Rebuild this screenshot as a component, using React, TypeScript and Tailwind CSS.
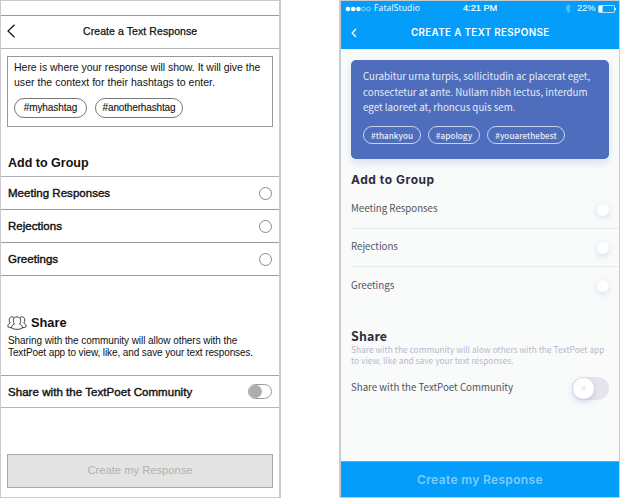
import type { ReactNode } from "react";

const sourceSans = "font-['Noto_Sans_CJK_SC','Noto_Sans',sans-serif]";
const montserrat = "font-['Inter','Open_Sans',sans-serif]";

function GroupRow({ label, height }: { label: string; height: string }) {
  return (
    <div className={`flex items-center justify-between border-b border-[#9b9b9b] pl-[7px] pr-[7.5px] ${height}`}>
      <span className="pt-[2px] text-[11.5px] leading-none tracking-[0.03px] [-webkit-text-stroke:0.4px_#111]">{label}</span>
      <span className="size-[13px] rounded-full border border-[#8a8a8a] bg-white" />
    </div>
  );
}

function Wireframe() {
  return (
    <section className="flex h-[498px] w-[281px] shrink-0 flex-col whitespace-nowrap border-y border-l border-r-2 border-[#cbcad1] bg-white font-['Liberation_Sans',Arial,sans-serif] text-[#111]">
      <div className="h-[15px] shrink-0 border-b border-[#999]" />
      <header className="flex h-[33px] shrink-0 items-center border-b border-[#b5b5b5] pb-[2px] pl-[6px]">
        <svg width="9" height="14" viewBox="0 0 9 14" fill="none" stroke="#111" strokeWidth="1.2">
          <path d="M7.5 .7 1 7l6.500 6.300" />
        </svg>
        <h1 className="ml-[67px] text-[10.5px] leading-none tracking-[0.08px] [-webkit-text-stroke:0.25px_#111]">Create a Text Response</h1>
      </header>
      <div className="ml-[6px] mt-[7px] h-[71px] w-[266px] shrink-0 border border-[#999] pl-[6px] pt-[3px]">
        <p className="text-[10.5px] leading-[15px] tracking-[-0.02px]">
          Here is where your response will show. It will give the
          <br />
          <span className="tracking-[0.03px]">user the context for their hashtags to enter.</span>
        </p>
        <div className="mt-[8px] flex gap-[8px]">
          <span className="flex h-[20px] w-[73px] items-center justify-center rounded-full border border-[#777] text-[10px] leading-none tracking-[-0.1px] [-webkit-text-stroke:0.1px_#111]">#myhashtag</span>
          <span className="flex h-[20px] w-[88px] items-center justify-center rounded-full border border-[#777] text-[10px] leading-none tracking-[-0.15px] [-webkit-text-stroke:0.1px_#111]">#anotherhashtag</span>
        </div>
      </div>
      <div className="flex h-[50px] shrink-0 items-end border-b border-[#b2b2b2] pb-[7px] pl-[7px]">
        <h2 className="text-[12.5px] font-bold leading-none">Add to Group</h2>
      </div>
      <GroupRow label="Meeting Responses" height="h-[33px]" />
      <GroupRow label="Rejections" height="h-[33px]" />
      <GroupRow label="Greetings" height="h-[33px]" />
      <div className="h-[100px] shrink-0 border-b border-[#a5a5a5] pl-[6px] pt-[40px]">
        <div className="flex items-center gap-[4px]">
          <svg width="20" height="14" viewBox="0 0 18 13" fill="none" stroke="#222" strokeWidth=".8">
            <path d="M6.700 7.500C5.900 6.500 5.700 5.500 5.700 4c0-2 1.200-3.200 3.300-3.200S12.300 2 12.300 4c0 1.500-.2 2.500-1 3.500M6.700 7.500C4.800 8.200 4 9 4 11.200c1.200.8 3 1.200 5 1.200s3.800-.4 5-1.200c0-2.200-.8-3-2.700-3.700" />
            <path d="M6.300 1.300C4 .1 1.600 1.200 1.800 3.700c0 1.500.4 2.200 1 2.700C1.200 7 .5 8 .5 10c.9.600 2 .9 3.500.9M11.700 1.300c2.300-1.200 4.700-.1 4.500 2.400 0 1.500-.4 2.200-1 2.700 1.600.6 2.300 1.600 2.300 3.600-.9.600-2 .9-3.500.9" />
          </svg>
          <h2 className="pt-px text-[12.8px] font-bold leading-none">Share</h2>
        </div>
        <p className="ml-px mt-[5px] text-[10px] leading-[12px] tracking-[-0.07px]">
          Sharing with the community will allow others with the
          <br />
          <span className="tracking-[-0.11px]">TextPoet app to view, like, and save your text responses.</span>
        </p>
      </div>
      <div className="flex h-[32px] shrink-0 items-center justify-between border-b border-[#b5b5b5] pl-[7px] pr-[7px]">
        <span className="pt-[2px] text-[11.5px] leading-none tracking-[0.05px] [-webkit-text-stroke:0.4px_#111]">Share with the TextPoet Community</span>
        <span className="flex h-[15px] w-[24px] items-center rounded-full border border-[#999]">
          <span className="size-[13px] rounded-full bg-[#adadad]" />
        </span>
      </div>
      <button className="ml-[6px] mt-[46px] h-[34px] w-[266px] shrink-0 border border-[#a9a9a9] bg-[#e4e4e4] text-[11.2px] leading-none text-[#b0b0b0]">
        Create my Response
      </button>
    </section>
  );
}

function Tag({ children, width }: { children: ReactNode; width: string }) {
  return (
    <span className={`flex h-[18px] items-center justify-center rounded-full border border-[#c7d3ee] pb-px text-[8.2px] font-medium leading-none ${width}`}>
      {children}
    </span>
  );
}

function Choice({ label }: { label: string }) {
  return (
    <div className="flex h-[38px] items-center justify-between pr-[10.5px]">
      <span className="pb-px text-[9.7px] leading-none text-[#505260]">{label}</span>
      <span className="size-[12px] rounded-full bg-white shadow-[0_2px_6px_rgba(105,130,210,0.26)]" />
    </div>
  );
}

function Mockup() {
  return (
    <section className={`flex h-[498px] w-[281px] shrink-0 flex-col whitespace-nowrap border-y border-l-2 border-r border-[#cbcad1] bg-[#f9fbfa] ${sourceSans}`}>
      <header className="h-[48px] shrink-0 bg-[#049dfa] text-white">
        <div className="flex h-[15px] items-center pl-[4px] font-['Open_Sans',sans-serif] text-[8.5px] leading-none">
          <svg className="shrink-0" width="26" height="6" viewBox="0 0 26 6" fill="white">
            <circle cx="3" cy="3" r="2.300" />
            <circle cx="8.200" cy="3" r="2.300" />
            <circle cx="13.400" cy="3" r="2.300" />
            <circle cx="18.400" cy="3" r="1.900" fill="none" stroke="white" strokeWidth=".5" />
            <circle cx="23.500" cy="3" r="1.900" fill="none" stroke="white" strokeWidth=".5" />
          </svg>
          <span className="ml-[3px] w-[89px] shrink-0 tracking-[0.15px]">FatalStudio</span>
          <span className="w-[102px] shrink-0 pt-px font-['Liberation_Sans',sans-serif] text-[9.200px] [-webkit-text-stroke:0.2px_white]">4:21 PM</span>
          <svg className="shrink-0" width="6" height="9" viewBox="0 0 6 9" fill="none" stroke="#a3dafa" strokeWidth=".7">
            <path d="m.7 2.500 4.500 4L3 8.300V.7l2.200 1.800-4.500 4" />
          </svg>
          <span className="ml-[6px] w-[21px] shrink-0 pt-px font-['Liberation_Sans',sans-serif] text-[9.200px]">22%</span>
          <svg className="shrink-0" width="19" height="8" viewBox="0 0 19 8" fill="none">
            <rect x=".5" y=".5" width="16" height="7" rx=".8" stroke="#dff3ff" strokeWidth=".8" />
            <rect x="1" y="1" width="3.500" height="6" fill="white" />
            <path d="M17.500 3v2" stroke="white" strokeWidth="1" />
          </svg>
        </div>
        <div className="flex h-[33px] items-center pl-[10px]">
          <svg width="6" height="10" viewBox="0 0 6 10" fill="none" stroke="white" strokeWidth="1.300">
            <path d="M5 1 1.200 5 5 9" />
          </svg>
          <h1 className={`ml-[54px] pt-px text-[9.8px] font-semibold leading-none tracking-[0.36px] ${montserrat}`}>CREATE A TEXT RESPONSE</h1>
        </div>
      </header>
      <article className="ml-[10px] mt-[11px] h-[99px] w-[258px] shrink-0 rounded-[5px] bg-[#4e6dbc] px-[12px] pt-[9px] text-[#e6ecf9] shadow-[0_4px_8px_rgba(78,109,188,0.18)]">
        <p className="text-[9.75px] leading-[15.700px]">
          Curabitur urna turpis, sollicitudin ac placerat eget,
          <br />
          consectetur at ante. Nullam nibh lectus, interdum
          <br />
          eget laoreet at, rhoncus quis sem.
        </p>
        <div className="mt-[10px] flex gap-[7px]">
          <Tag width="w-[58px]">#thankyou</Tag>
          <Tag width="w-[52px]">#apology</Tag>
          <Tag width="w-[78px]">#youarethebest</Tag>
        </div>
      </article>
      <h2 className={`ml-[10px] mt-[13px] h-[15px] shrink-0 text-[12px] font-bold leading-[15px] tracking-[0.55px] text-[#2c2c3c] ${montserrat}`}>Add to Group</h2>
      <div className="ml-[10px] mt-[4px] shrink-0 divide-y divide-[#e8e8ef]">
        <Choice label="Meeting Responses" />
        <Choice label="Rejections" />
        <Choice label="Greetings" />
      </div>
      <div className="ml-[10px] mt-[23px] shrink-0">
        <h2 className="text-[12.4px] font-bold leading-[16px] tracking-[0.15px] text-[#2c2c3c]">Share</h2>
        <p className="text-[8.4px] leading-[10.500px] tracking-[0.01px] text-[#b7b8cc]">
          Share with the community will alow others with the TextPoet app
          <br />
          to view, like and save your text responses.
        </p>
      </div>
      <div className="ml-[10px] mt-[12px] flex h-[23px] shrink-0 items-center justify-between pr-[10px]">
        <span className="pb-px text-[9.7px] leading-none text-[#505260]">Share with the TextPoet Community</span>
        <span className="flex h-[23px] w-[37px] items-center rounded-full bg-[#e6e5ec]">
          <span className="ml-[1px] flex size-[21px] items-center justify-center rounded-full bg-white shadow-[0_3px_7px_rgba(95,115,190,0.28)]">
            <svg width="5" height="5" viewBox="0 0 5 5" stroke="#d4d4dc" strokeWidth="1">
              <path d="m.5.5 4 4m0-4-4 4" />
            </svg>
          </span>
        </span>
      </div>
      <button className={`mt-auto h-[36px] shrink-0 border-t border-[#68a9d8] bg-[#049dfa] text-[12px] font-semibold leading-none tracking-[0.35px] text-[#7ecbfa] ${montserrat}`}>
        Create my Response
      </button>
    </section>
  );
}

export default function App() {
  return (
    <main className="flex h-[498px] w-[620px] justify-between overflow-hidden bg-white">
      <Wireframe />
      <Mockup />
    </main>
  );
}
